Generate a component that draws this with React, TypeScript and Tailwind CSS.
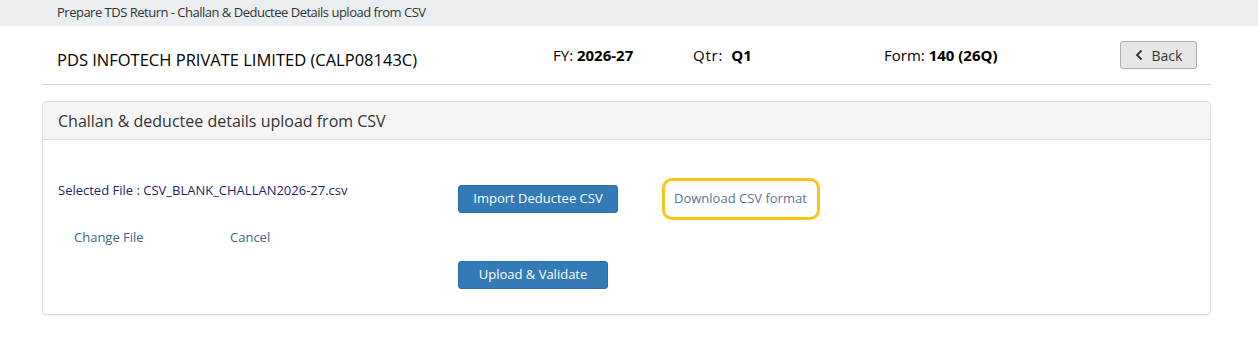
export default function App() {
  return (
    <div className="min-h-[349px] w-full bg-white text-[#333] font-['Open_Sans',sans-serif]">
      {/* Page title bar */}
      <div className="h-[26px] bg-[#eaeef1] pl-[57px] flex items-center text-[13px] tracking-[-0.5px] text-[#333]">
        Prepare TDS Return - Challan &amp; Deductee Details upload from CSV
      </div>

      <div className="ml-[42px] w-[1169px]">
        {/* Header row */}
        <div className="flex items-center h-[59px] border-b border-[#d4d4d4] pl-[15px] pr-[14px]">
          <div className="w-[496px] text-[16.5px] text-black font-medium pt-[10px]">
            PDS INFOTECH PRIVATE LIMITED (CALP08143C)
          </div>
          <div className="w-[140px] text-[15px] text-black">
            FY: <span className="font-bold">2026-27</span>
          </div>
          <div className="w-[191px] text-[15px] text-black">
            <span className="tracking-[0.8px]">Qtr:</span> <span className="ml-[4px] font-bold">Q1</span>
          </div>
          <div className="flex-1 text-[15px] text-black">
            Form: <span className="font-bold">140 (26Q)</span>
          </div>
          <button className="h-[28px] w-[77px] flex items-center justify-center gap-[8px] rounded-[3px] border border-[#adadad] bg-[#e6e6e6] text-[14px] text-[#333]">
            <svg width="9" height="12" viewBox="0 0 9 12" fill="none">
              <path d="M6.5 1.5 L2 6 L6.5 10.5" stroke="#333" strokeWidth="1.8" />
            </svg>
            Back
          </button>
        </div>

        {/* Panel */}
        <div className="mt-[16px] border border-[#dddddd] rounded-[4px] shadow-[0_1px_1px_rgba(0,0,0,0.05)]">
          <div className="h-[38px] bg-[#f5f5f5] border-b border-[#dddddd] rounded-t-[4px] flex items-center pl-[15px] text-[16px] text-[#333]">
            Challan &amp; deductee details upload from CSV
          </div>
          <div className="h-[174px] flex pt-[40px]">
            <div className="w-[415px] pl-[15px]">
              <div className="text-[13px] text-[#1f1f6b] leading-[20px]">
                Selected File : CSV_BLANK_CHALLAN2026-27.csv
              </div>
              <div className="flex mt-[28px] pl-[16px] text-[13px] text-[#3d6585]">
                <span className="w-[156px]">Change File</span>
                <span>Cancel</span>
              </div>
            </div>
            <div className="flex flex-col gap-[48px] pt-[5px]">
              <div className="flex items-center h-[28px]">
                <button className="h-[28px] w-[160px] rounded-[3px] bg-[#337ab7] border border-[#2e6da4] text-white text-[13px]">
                  Import Deductee CSV
                </button>
                <div className="ml-[44px] h-[42px] w-[158px] shrink-0 rounded-[10px] border-[3px] border-[#fcc419] flex items-center pl-[9px] text-[13px] text-[#5a7591]">
                  Download CSV format
                </div>
              </div>
              <button className="h-[28px] w-[150px] rounded-[3px] bg-[#337ab7] border border-[#2e6da4] text-white text-[13px]">
                Upload &amp; Validate
              </button>
            </div>
          </div>
        </div>
      </div>
    </div>
  );
}
